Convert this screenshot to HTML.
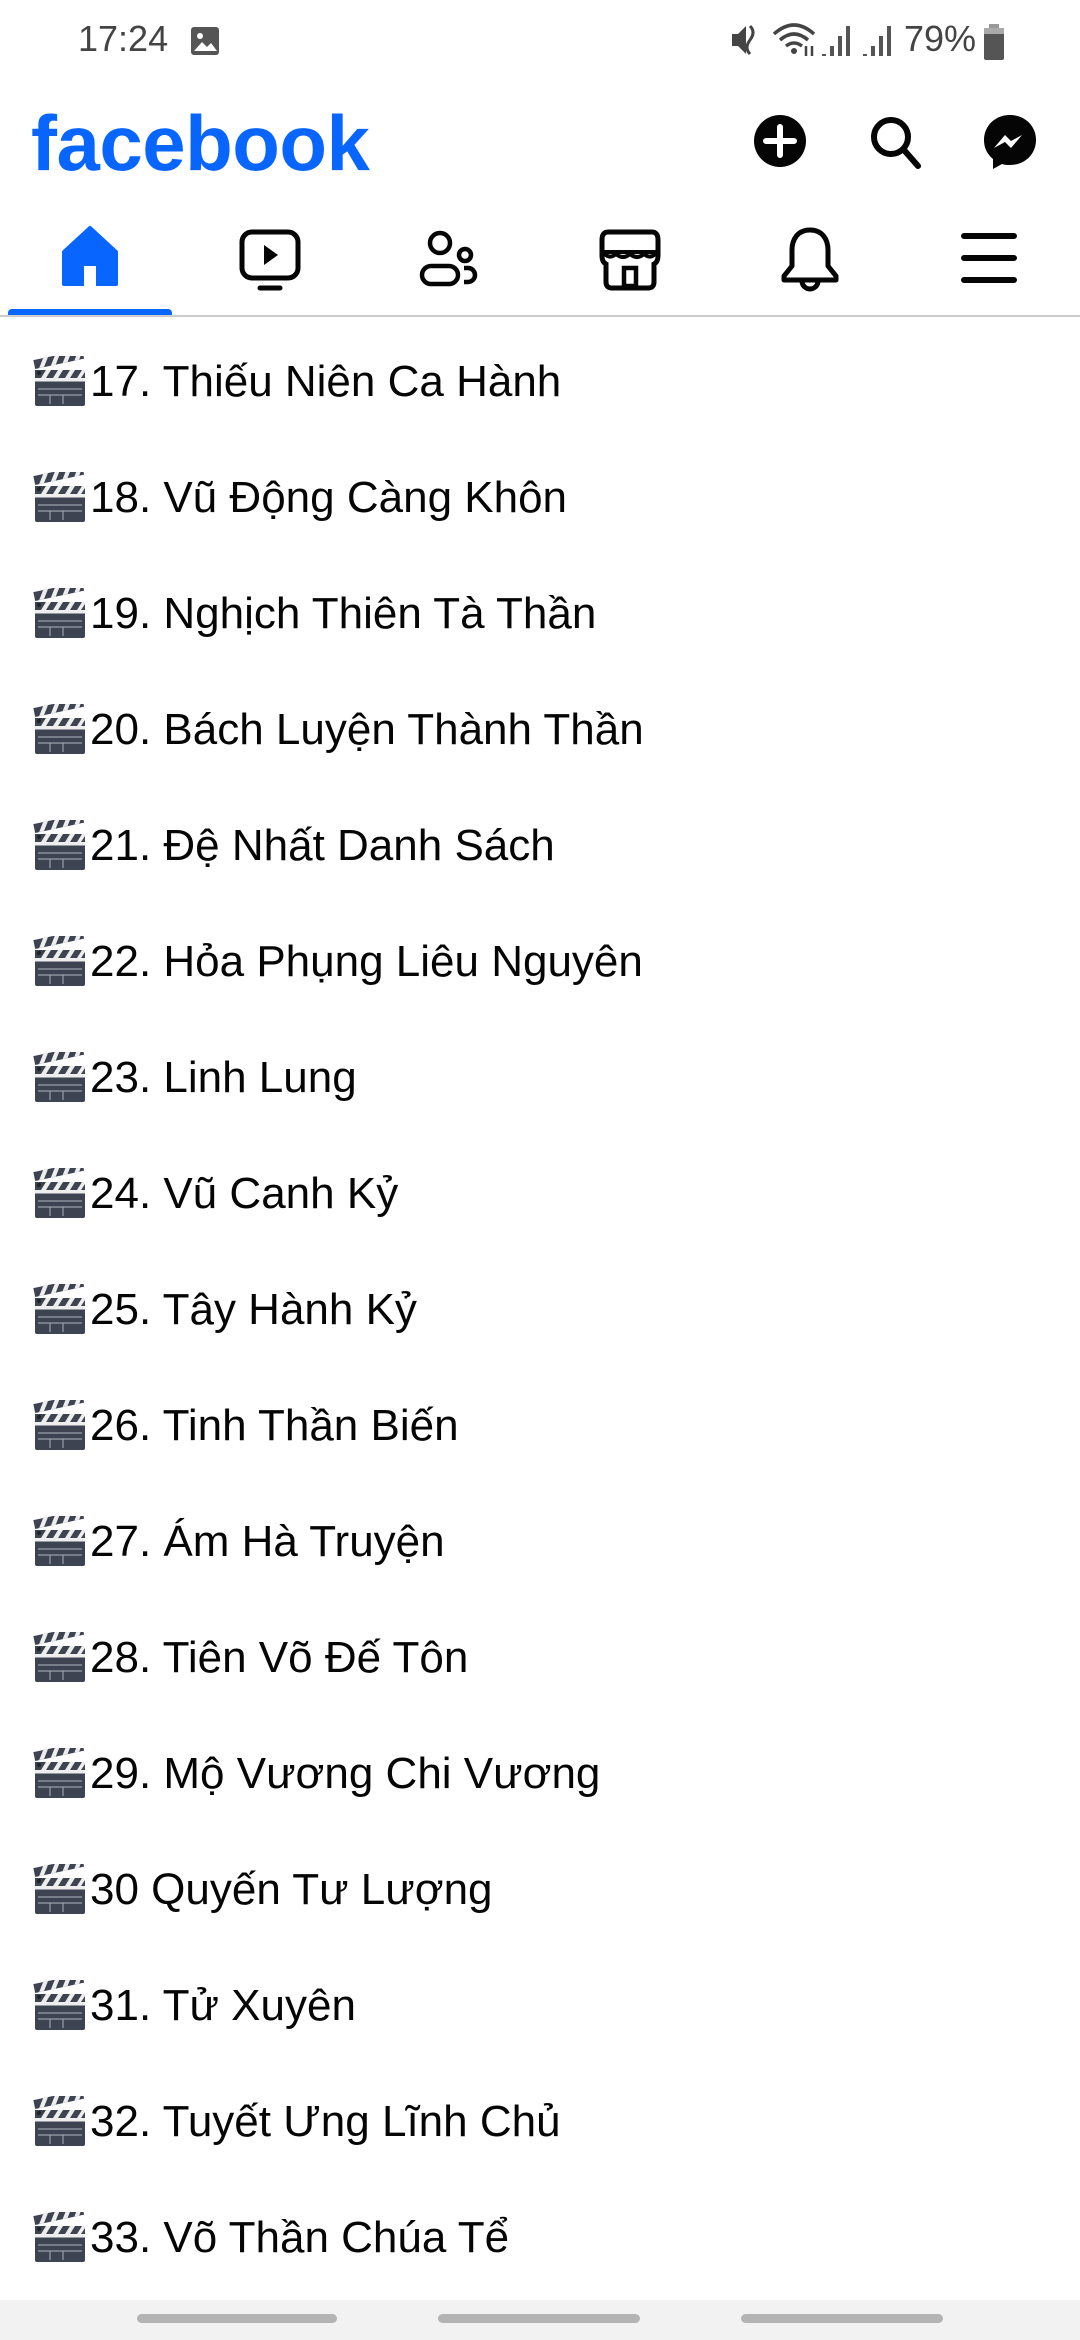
<!DOCTYPE html>
<html><head><meta charset="utf-8"><style>
html,body{margin:0;padding:0;width:1080px;height:2340px;background:#fff;overflow:hidden;font-family:"Liberation Sans",sans-serif;position:relative}
.abs{position:absolute}
.item{position:absolute;left:33px;height:60px;display:flex;align-items:center;font-size:44px;color:#050505;white-space:nowrap}
.item svg{width:54px;height:52px;margin-right:3px}
</style></head><body>
<svg width="0" height="0" style="position:absolute"><defs>
<symbol id="clap" viewBox="0 0 54 52">
<rect x="2" y="22" width="50" height="28" rx="2" fill="#3d4350"/>
<rect x="2" y="22" width="50" height="4" fill="#eee"/>
<path d="M2 26h50" stroke="#3d4350" stroke-width="1"/>
<g stroke="#9aa0aa" stroke-width="1.2"><path d="M5 33h44M5 39h44M17 39v9M30 39v9"/></g>
<g transform="rotate(-12 2 12)"><rect x="2" y="4" width="50" height="9" fill="#3d4350"/>
<path d="M6 13l6-9h5l-6 9zM18 13l6-9h5l-6 9zM30 13l6-9h5l-6 9zM42 13l6-9h4v1l-5 8z" fill="#eee"/></g>
<rect x="2" y="14" width="50" height="8" fill="#3d4350"/>
<path d="M8 22l5-8h5l-5 8zM20 22l5-8h5l-5 8zM32 22l5-8h5l-5 8zM44 22l5-8h3v2l-4 6z" fill="#eee"/>
<circle cx="6" cy="17" r="2" fill="#222"/>
</symbol></defs></svg>

<!-- status bar -->
<div class="abs" style="left:78px;top:18px;font-size:36px;color:#444">17:24</div>
<svg class="abs" style="left:190px;top:26px" width="30" height="30" viewBox="0 0 30 30"><rect x="1" y="1" width="28" height="28" rx="3" fill="#555"/><circle cx="10" cy="10" r="3" fill="#fff"/><path d="M4 25l8-9 5 5 4-4 6 8z" fill="#fff"/></svg>
<svg class="abs" style="left:730px;top:22px" width="60" height="36" viewBox="0 0 60 36"><path d="M2 12h6l8-8v28l-8-8H2z" fill="#444"/><path d="M20 4q6 6 0 14q-6 8 0 14" stroke="#444" stroke-width="3" fill="none"/></svg>
<svg class="abs" style="left:772px;top:22px" width="48" height="36" viewBox="0 0 48 36"><path d="M2 12q20-18 40 0M8 18q14-12 28 0M14 24q8-6 16 0" stroke="#444" stroke-width="3.5" fill="none"/><circle cx="22" cy="29" r="3" fill="#444"/><path d="M34 24v10M40 34V24" stroke="#444" stroke-width="2.5"/></svg>
<svg class="abs" style="left:820px;top:24px" width="36" height="34" viewBox="0 0 36 34"><path d="M4 30v2M12 22v10M20 12v20M28 2v30" stroke="#555" stroke-width="4"/></svg>
<svg class="abs" style="left:861px;top:24px" width="36" height="34" viewBox="0 0 36 34"><path d="M4 30v2M12 22v10M20 12v20M28 2v30" stroke="#555" stroke-width="4"/></svg>
<div class="abs" style="left:904px;top:18px;font-size:36px;color:#444">79%</div>
<svg class="abs" style="left:983px;top:24px" width="22" height="36" viewBox="0 0 22 36"><rect x="6" y="0" width="10" height="4" fill="#999"/><rect x="1" y="4" width="20" height="32" rx="2" fill="#555"/><rect x="1" y="4" width="20" height="6" fill="#aaa"/></svg>

<!-- header -->
<div class="abs" style="left:31px;top:104px;font-size:78px;font-weight:bold;color:#0866ff;letter-spacing:-0.5px;line-height:1">facebook</div>
<svg class="abs" style="left:753px;top:114px" width="54" height="54" viewBox="0 0 54 54"><circle cx="27" cy="27" r="26" fill="#050505"/><path d="M27 13v28M13 27h28" stroke="#fff" stroke-width="6" stroke-linecap="round"/></svg>
<svg class="abs" style="left:868px;top:114px" width="56" height="56" viewBox="0 0 56 56"><circle cx="23" cy="23" r="17" stroke="#050505" stroke-width="6" fill="none"/><path d="M36 36l14 16" stroke="#050505" stroke-width="6" stroke-linecap="round"/></svg>
<svg class="abs" style="left:983px;top:114px" width="54" height="56" viewBox="0 0 54 56"><path d="M27 1C12 1 1 12 1 26c0 8 3 14 9 19v10l9-5c3 1 5 1 8 1 15 0 26-11 26-25S42 1 27 1z" fill="#050505"/><path d="M11 34l11-13 6 6 11-6-11 13-6-6z" fill="#fff"/></svg>

<!-- tabs -->
<svg class="abs" style="left:60px;top:226px" width="60" height="62" viewBox="0 0 60 62"><path d="M30 2L4 26v32h52V26z" fill="#0866ff" stroke="#0866ff" stroke-width="4" stroke-linejoin="round"/><rect x="24" y="40" width="12" height="20" fill="#fff"/></svg>
<svg class="abs" style="left:238px;top:228px" width="64" height="64" viewBox="0 0 64 64"><rect x="4" y="4" width="56" height="46" rx="10" stroke="#050505" stroke-width="5" fill="none"/><path d="M26 17v20l14-10z" fill="#050505"/><path d="M22 60h20" stroke="#050505" stroke-width="5" stroke-linecap="round"/></svg>
<svg class="abs" style="left:418px;top:228px" width="64" height="64" viewBox="0 0 64 64"><circle cx="22" cy="15" r="10" stroke="#050505" stroke-width="4.5" fill="none"/><circle cx="47" cy="27" r="6" stroke="#050505" stroke-width="4.5" fill="none"/><rect x="4" y="38" width="36" height="18" rx="9" stroke="#050505" stroke-width="4.5" fill="none"/><path d="M46 40h4a6 6 0 010 14h-4" stroke="#050505" stroke-width="4.5" fill="none"/></svg>
<svg class="abs" style="left:598px;top:228px" width="64" height="64" viewBox="0 0 64 64"><path d="M10 4h44q6 0 6 8v16q0 6-4 8v18q0 6-6 6H14q-6 0-6-6V36q-4-2-4-8V12q0-8 6-8z" stroke="#050505" stroke-width="5" fill="none"/><path d="M5 24h54M5 24q6 8 13 2q7 6 14 0q7 6 14 0q7 6 13-2" stroke="#050505" stroke-width="4" fill="none"/><rect x="26" y="40" width="12" height="18" stroke="#050505" stroke-width="4.5" fill="none"/></svg>
<svg class="abs" style="left:780px;top:226px" width="60" height="68" viewBox="0 0 60 68"><path d="M30 4c-12 0-18 9-18 20v16l-8 10v4h52v-4l-8-10V24C48 13 42 4 30 4z" stroke="#050505" stroke-width="5" fill="none" stroke-linejoin="round"/><path d="M22 55a8 8 0 0016 0" stroke="#050505" stroke-width="5" fill="none"/></svg>
<svg class="abs" style="left:960px;top:230px" width="58" height="56" viewBox="0 0 58 56"><path d="M4 6h50M4 28h50M4 50h50" stroke="#050505" stroke-width="6" stroke-linecap="round"/></svg>
<div class="abs" style="left:8px;top:309px;width:164px;height:7px;background:#0866ff;border-radius:4px 4px 0 0"></div>
<div class="abs" style="left:0;top:315px;width:1080px;height:2px;background:#ccc"></div>

<!-- list -->
<div class="item" style="top:352px"><svg><use href="#clap"/></svg>17. Thiếu Niên Ca Hành</div>
<div class="item" style="top:468px"><svg><use href="#clap"/></svg>18. Vũ Động Càng Khôn</div>
<div class="item" style="top:584px"><svg><use href="#clap"/></svg>19. Nghịch Thiên Tà Thần</div>
<div class="item" style="top:700px"><svg><use href="#clap"/></svg>20. Bách Luyện Thành Thần</div>
<div class="item" style="top:816px"><svg><use href="#clap"/></svg>21. Đệ Nhất Danh Sách</div>
<div class="item" style="top:932px"><svg><use href="#clap"/></svg>22. Hỏa Phụng Liêu Nguyên</div>
<div class="item" style="top:1048px"><svg><use href="#clap"/></svg>23. Linh Lung</div>
<div class="item" style="top:1164px"><svg><use href="#clap"/></svg>24. Vũ Canh Kỷ</div>
<div class="item" style="top:1280px"><svg><use href="#clap"/></svg>25. Tây Hành Kỷ</div>
<div class="item" style="top:1396px"><svg><use href="#clap"/></svg>26. Tinh Thần Biến</div>
<div class="item" style="top:1512px"><svg><use href="#clap"/></svg>27. Ám Hà Truyện</div>
<div class="item" style="top:1628px"><svg><use href="#clap"/></svg>28. Tiên Võ Đế Tôn</div>
<div class="item" style="top:1744px"><svg><use href="#clap"/></svg>29. Mộ Vương Chi Vương</div>
<div class="item" style="top:1860px"><svg><use href="#clap"/></svg>30 Quyến Tư Lượng</div>
<div class="item" style="top:1976px"><svg><use href="#clap"/></svg>31. Tử Xuyên</div>
<div class="item" style="top:2092px"><svg><use href="#clap"/></svg>32. Tuyết Ưng Lĩnh Chủ</div>
<div class="item" style="top:2208px"><svg><use href="#clap"/></svg>33. Võ Thần Chúa Tể</div>

<!-- bottom bar -->
<div class="abs" style="left:0;top:2300px;width:1080px;height:40px;background:#f2f2f2"></div>
<div class="abs" style="left:137px;top:2314px;width:200px;height:9px;border-radius:5px;background:#b4b4b4"></div>
<div class="abs" style="left:438px;top:2314px;width:202px;height:9px;border-radius:5px;background:#b4b4b4"></div>
<div class="abs" style="left:741px;top:2314px;width:202px;height:9px;border-radius:5px;background:#b4b4b4"></div>
</body></html>
